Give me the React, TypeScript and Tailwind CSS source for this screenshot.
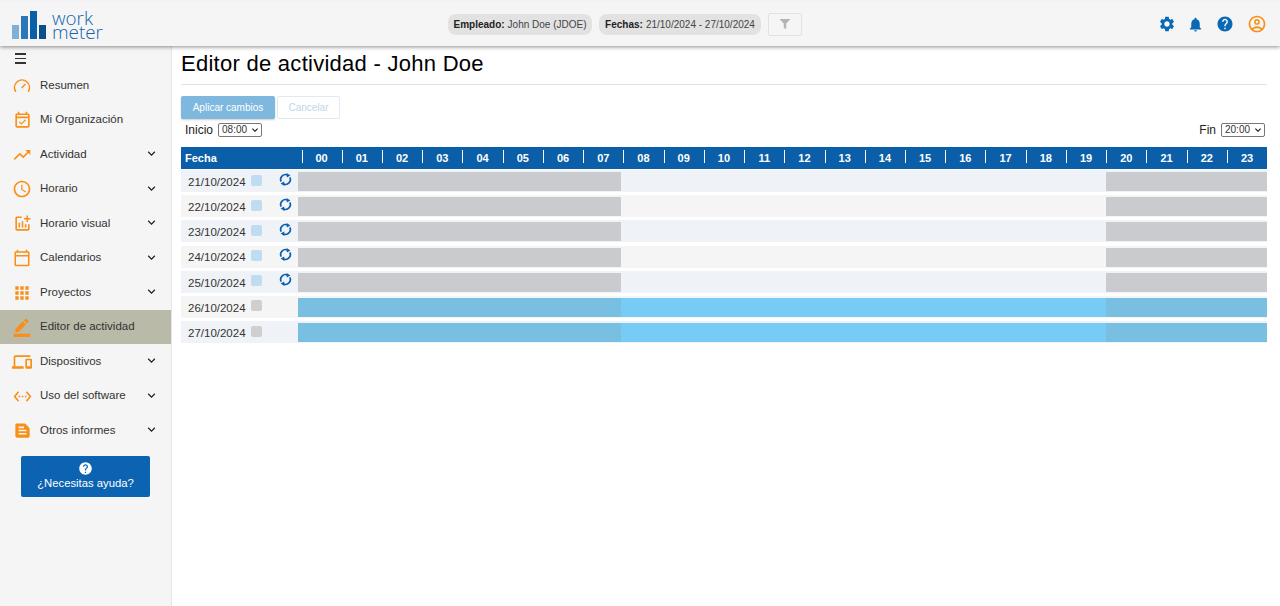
import React from "react";
import {
  MdSettings, MdNotifications, MdOutlineAccountCircle, MdOutlineEventAvailable, MdTrendingUp, MdOutlineSchedule,
  MdOutlineAddchart, MdOutlineCalendarToday, MdApps, MdBorderColor, MdOutlineDevices, MdSettingsEthernet, MdTextSnippet,
  MdKeyboardArrowDown, MdHelp,
} from "react-icons/md";
import { FaFilter } from "react-icons/fa";
import { Gauge } from "lucide-react";

const menu: { label: string; icon: React.ReactNode; chev?: boolean; active?: boolean }[] = [
  { label: "Resumen", icon: <Gauge size={18} strokeWidth={2} /> },
  { label: "Mi Organización", icon: <MdOutlineEventAvailable size={19} /> },
  { label: "Actividad", icon: <MdTrendingUp size={20} />, chev: true },
  { label: "Horario", icon: <MdOutlineSchedule size={20} />, chev: true },
  { label: "Horario visual", icon: <MdOutlineAddchart size={19} />, chev: true },
  { label: "Calendarios", icon: <MdOutlineCalendarToday size={18} />, chev: true },
  { label: "Proyectos", icon: <MdApps size={20} />, chev: true },
  { label: "Editor de actividad", icon: <MdBorderColor size={20} />, active: true },
  { label: "Dispositivos", icon: <MdOutlineDevices size={20} />, chev: true },
  { label: "Uso del software", icon: <MdSettingsEthernet size={19} />, chev: true },
  { label: "Otros informes", icon: <MdTextSnippet size={19} />, chev: true },
];

const hours = Array.from({ length: 24 }, (_, i) => String(i).padStart(2, "0"));
const rows = [
  { d: "21/10/2024", work: true },
  { d: "22/10/2024", work: true },
  { d: "23/10/2024", work: true },
  { d: "24/10/2024", work: true },
  { d: "25/10/2024", work: true },
  { d: "26/10/2024", work: false },
  { d: "27/10/2024", work: false },
];

function SyncIcon() {
  return (
    <svg width="13" height="13" viewBox="0 0 13 13" className="ml-[17px] mb-[4px] text-[#0b5fae]" fill="none">
      <path d="M2.2 8.6 A4.8 4.8 0 0 1 8.6 2.1" stroke="currentColor" strokeWidth="1.7" />
      <path d="M10.8 4.4 A4.8 4.8 0 0 1 4.4 10.9" stroke="currentColor" strokeWidth="1.7" />
      <path d="M7.6 0 L11.4 2.4 L7.8 4.6 Z" fill="currentColor" />
      <path d="M5.4 13 L1.6 10.6 L5.2 8.4 Z" fill="currentColor" />
    </svg>
  );
}

function TimeSelect({ value }: { value: string }) {
  return (
    <span className="relative ml-[5px] inline-flex">
      <select defaultValue={value} className="w-[44px] h-[14px] pl-[3px] border border-[#777] rounded-[2px] text-[10px] leading-[12px] text-[#333] bg-white appearance-none">
        <option>{value}</option>
      </select>
      <MdKeyboardArrowDown size={12} className="absolute right-[1px] top-[1px] text-[#111] pointer-events-none" />
    </span>
  );
}

function Row({ d, work, odd }: { d: string; work: boolean; odd: boolean }) {
  return (
    <div className={`flex h-[22px] mb-[3.2px] ${odd ? "bg-[#eff2f7]" : "bg-[#f5f5f5]"}`}>
      <div className="w-[117px] flex items-center shrink-0 pl-[7px] text-[11.5px] text-[#333]">
        <span className="mt-[3px]">{d}</span>
        <span className={`ml-[5px] mb-[2px] w-[11px] h-[11px] rounded-[2px] ${work ? "bg-[#bfdcf1]" : "bg-[#cfcfcf]"}`} />
        {work && <SyncIcon />}
      </div>
      <div className={`flex-1 flex mt-[2px] mb-[1px] ${work ? "" : "bg-[#76ccf5]"}`}>
        <div className={`w-[323px] ${work ? "bg-[#cacbce]" : "bg-[#79bfe2]"}`} />
        <div className="flex-1" />
        <div className={`w-[161.5px] ${work ? "bg-[#cacbce]" : "bg-[#79bfe2]"}`} />
      </div>
    </div>
  );
}

export default function App() {
  return (
    <div className="w-[1280px] h-[606px] overflow-hidden bg-white flex flex-col font-['Liberation_Sans',Arial,sans-serif] text-black">
      <header className="relative z-10 h-[46px] shrink-0 bg-[#f5f5f5] border-t-2 border-[#f3f1f4] shadow-[0_1px_4px_rgba(0,0,0,0.45)] flex items-center">
        <div className="w-[440px] pl-[12px] flex items-center">
          <svg width="35" height="28" viewBox="0 0 35 28" className="mt-[2px]">
            <rect x="0" y="14" width="7" height="14" fill="#7fb0d8" />
            <rect x="9" y="5" width="7" height="23" fill="#2a78b8" />
            <rect x="18" y="0" width="7" height="28" fill="#0b5fa8" />
            <rect x="27" y="14" width="7" height="14" fill="#0a4f8c" />
          </svg>
          <div className="ml-[5px] mt-[2px] font-['Open_Sans',sans-serif] font-light text-[#0f64ad] text-[18.8px] leading-[14px]">
            work<br />meter
          </div>
        </div>
        <div className="flex items-center ml-[8px]">
          <div className="h-[21px] w-[144px] justify-center rounded-[8px] bg-[#e2e2e2] text-[10px] flex items-center text-[#444]">
            <b className="text-[#222] mr-[3px]">Empleado:</b> John Doe (JDOE)
          </div>
          <div className="h-[21px] w-[162px] justify-center ml-[7px] rounded-[8px] bg-[#e2e2e2] text-[10px] flex items-center text-[#444]">
            <b className="text-[#222] mr-[3px]">Fechas:</b> 21/10/2024 - 27/10/2024
          </div>
          <div className="w-[34px] h-[23px] ml-[7px] rounded-[2px] border border-[#e2e2e2] flex items-center justify-center text-[#b4b4b4]">
            <FaFilter size={10} />
          </div>
        </div>
        <div className="ml-auto flex items-center pr-[13px] text-[#0a69b5]">
          <MdSettings size={18} />
          <MdNotifications size={17} className="ml-[11px]" />
          <MdHelp size={18} className="ml-[12px]" />
          <MdOutlineAccountCircle size={20} className="ml-[13px] text-[#f98f14]" />
        </div>
      </header>
      <div className="flex flex-1 min-h-0">
        <aside className="w-[172px] shrink-0 bg-[#f5f5f5] border-r border-[#e4e4e4]">
          <div className="h-[22.3px] pl-[15px] pt-[7px] flex flex-col gap-[3px]">
            <div className="w-[11px] h-[1.5px] bg-[#333]" />
            <div className="w-[11px] h-[1.5px] bg-[#333]" />
            <div className="w-[11px] h-[1.5px] bg-[#333]" />
          </div>
          {menu.map((m) => (
            <div key={m.label} className={`h-[34.5px] flex items-center pl-[12px] text-[11.5px] text-[#333] ${m.active ? "bg-[#b9baa8]" : ""}`}>
              <span className="w-[20px] flex justify-center text-[#f98f14]">{m.icon}</span>
              <span className="ml-[8px]">{m.label}</span>
              {m.chev && <MdKeyboardArrowDown size={15} className="ml-auto mr-[12px] mb-[2px] text-[#222]" />}
            </div>
          ))}
          <div className="mt-[8.2px] ml-[21px] w-[129px] h-[41px] rounded-[2px] bg-[#0b63b1] text-white text-[11.3px] flex flex-col items-center justify-center">
            <MdHelp size={15} />
            <span className="leading-[15px]">¿Necesitas ayuda?</span>
          </div>
        </aside>
        <main className="flex-1 pl-[9px] pr-[13px] min-w-0">
          <h1 className="text-[22px] leading-[26px] pt-[5px] pb-[7px] border-b border-[#e0e0e0] tracking-[0.27px]">Editor de actividad - John Doe</h1>
          <div className="flex mt-[11px]">
            <div className="w-[94px] h-[23px] rounded-[2px] bg-[#7fb8df] text-white text-[10px] flex items-center justify-center shadow-[0_1px_2px_rgba(0,0,0,0.2)]">Aplicar cambios</div>
            <div className="w-[63px] h-[23px] ml-[2px] rounded-[2px] border border-[#deebf5] text-[#bfd6e8] text-[10px] flex items-center justify-center">Cancelar</div>
          </div>
          <div className="flex justify-between items-center h-[21px] text-[12px] text-[#222] pl-[4px] pr-[2px]">
            <div className="flex items-center">Inicio<TimeSelect value="08:00" /></div>
            <div className="flex items-center">Fin<TimeSelect value="20:00" /></div>
          </div>
          <div className="mt-[7px] flex h-[22px] bg-[#0b5fa8] text-white text-[11px] font-bold items-center mb-[1px]">
            <div className="w-[120.5px] pl-[4px] shrink-0">Fecha</div>
            <div className="flex-1 flex">
              {hours.map((h) => (
                <div key={h} className="relative flex-1 text-center">
                  {h}
                  <span className="absolute left-0 top-0 h-[13px] w-px bg-white" />
                </div>
              ))}
            </div>
          </div>
          {rows.map((r, i) => (
            <Row key={r.d} d={r.d} work={r.work} odd={i % 2 === 0} />
          ))}
        </main>
      </div>
    </div>
  );
}
